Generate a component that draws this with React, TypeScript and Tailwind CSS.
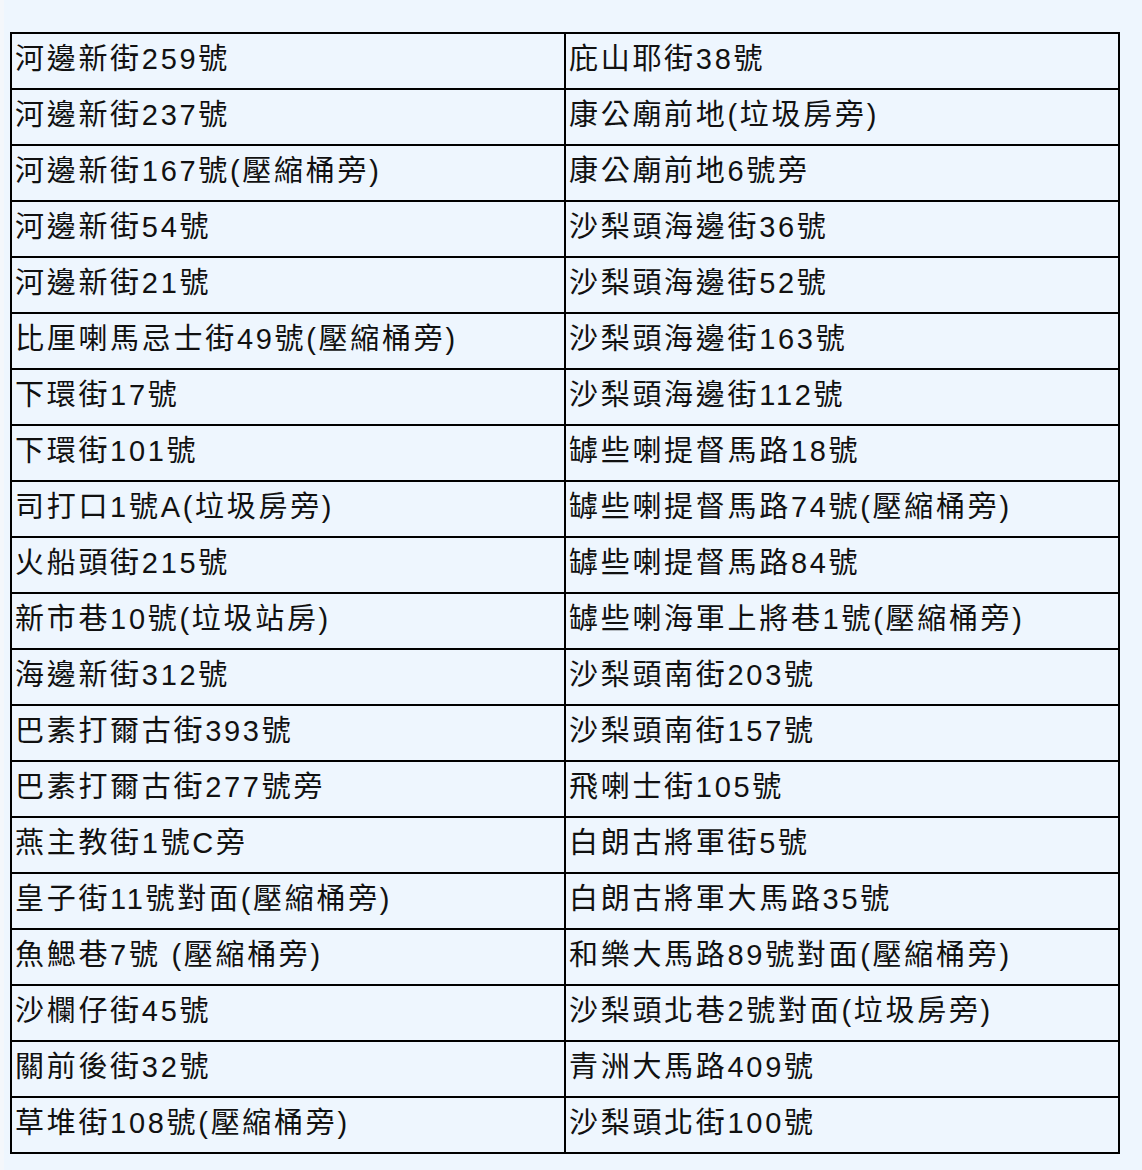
const rows: [string, string][] = [
  ["河邊新街259號", "庇山耶街38號"],
  ["河邊新街237號", "康公廟前地(垃圾房旁)"],
  ["河邊新街167號(壓縮桶旁)", "康公廟前地6號旁"],
  ["河邊新街54號", "沙梨頭海邊街36號"],
  ["河邊新街21號", "沙梨頭海邊街52號"],
  ["比厘喇馬忌士街49號(壓縮桶旁)", "沙梨頭海邊街163號"],
  ["下環街17號", "沙梨頭海邊街112號"],
  ["下環街101號", "罅些喇提督馬路18號"],
  ["司打口1號A(垃圾房旁)", "罅些喇提督馬路74號(壓縮桶旁)"],
  ["火船頭街215號", "罅些喇提督馬路84號"],
  ["新市巷10號(垃圾站房)", "罅些喇海軍上將巷1號(壓縮桶旁)"],
  ["海邊新街312號", "沙梨頭南街203號"],
  ["巴素打爾古街393號", "沙梨頭南街157號"],
  ["巴素打爾古街277號旁", "飛喇士街105號"],
  ["燕主教街1號C旁", "白朗古將軍街5號"],
  ["皇子街11號對面(壓縮桶旁)", "白朗古將軍大馬路35號"],
  ["魚鰓巷7號 (壓縮桶旁)", "和樂大馬路89號對面(壓縮桶旁)"],
  ["沙欄仔街45號", "沙梨頭北巷2號對面(垃圾房旁)"],
  ["關前後街32號", "青洲大馬路409號"],
  ["草堆街108號(壓縮桶旁)", "沙梨頭北街100號"],
]

// 垃圾收集點列表：兩欄地址，黑色細框
export default function App() {
  return (
    <div className="flex min-h-[1170px] w-full bg-[#eef6fe]">
      <div className="w-1 shrink-0 bg-[#f4f7fb]" />
      <div className="flex-1 pt-8 pl-[6px]">
        <div className="grid w-[1110px] grid-cols-2 border-t-2 border-l-2 border-black font-['Liberation_Sans','Noto_Sans_CJK_TC',sans-serif] text-[29px] leading-[36px] tracking-[2.7px] text-[#111]">
          {rows.map(([a, b], i) => (
            <div key={i} className="contents">
              <div className="h-[56px] border-r-2 border-b-2 border-black pl-[3px] pt-[7px] whitespace-nowrap">{a}</div>
              <div className="h-[56px] border-r-2 border-b-2 border-black pl-[3px] pt-[7px] whitespace-nowrap">{b}</div>
            </div>
          ))}
        </div>
      </div>
    </div>
  )
}
